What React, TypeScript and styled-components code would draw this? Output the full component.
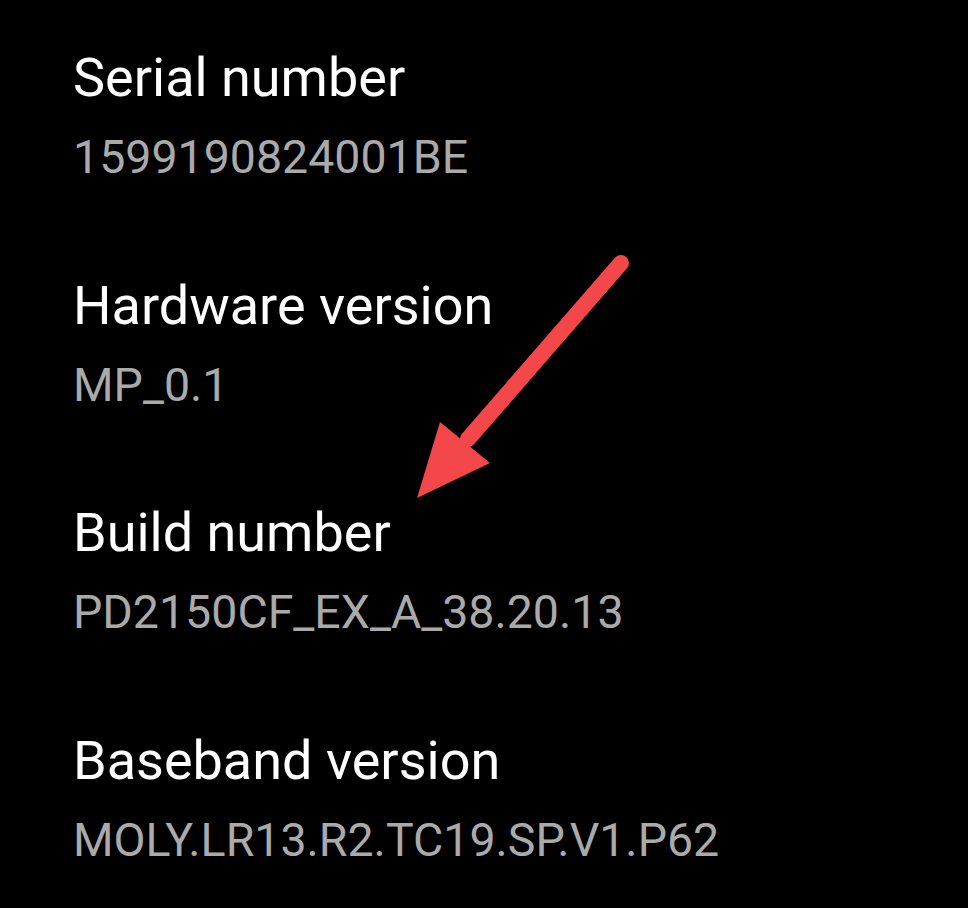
import React from "react";
import styled, { createGlobalStyle } from "styled-components";

const Global = createGlobalStyle`
  html, body { margin: 0; padding: 0; background: #000; }
  body { font-family: Roboto, "Noto Sans", sans-serif; }
`;

const Screen = styled.div`
  position: relative;
  width: 968px;
  height: 908px;
  background: #000;
  overflow: hidden;
  box-sizing: border-box;
  padding: 46px 0 0 73px;
`;

const List = styled.div`
  display: flex;
  flex-direction: column;
  gap: 88.5px;
`;

const Item = styled.div`
  display: flex;
  flex-direction: column;
  gap: 19px;
`;

const Title = styled.div`
  color: #ffffff;
  font-size: 54px;
  line-height: 64px;
  font-weight: 400;
`;

const Value = styled.div`
  color: #aaaaaa;
  font-size: 46.5px;
  line-height: 56px;
  font-weight: 400;
`;

const Arrow = styled.svg`
  position: absolute;
  left: 0;
  top: 0;
  pointer-events: none;
`;

const items = [
  { title: "Serial number", value: "1599190824001BE" },
  { title: "Hardware version", value: "MP_0.1" },
  { title: "Build number", value: "PD2150CF_EX_A_38.20.13" },
  { title: "Baseband version", value: "MOLY.LR13.R2.TC19.SP.V1.P62" },
];

export default function App() {
  return (
    <>
      <Global />
      <Screen>
        <List>
          {items.map((it) => (
            <Item key={it.title}>
              <Title>{it.title}</Title>
              <Value>{it.value}</Value>
            </Item>
          ))}
        </List>
        <Arrow width="968" height="908" viewBox="0 0 968 908">
          <line x1="621" y1="263" x2="468" y2="439" stroke="#f4474a" strokeWidth="16" strokeLinecap="round" />
          <polygon points="417,498 440,422 490,463" fill="#f4474a" />
        </Arrow>
      </Screen>
    </>
  );
}
